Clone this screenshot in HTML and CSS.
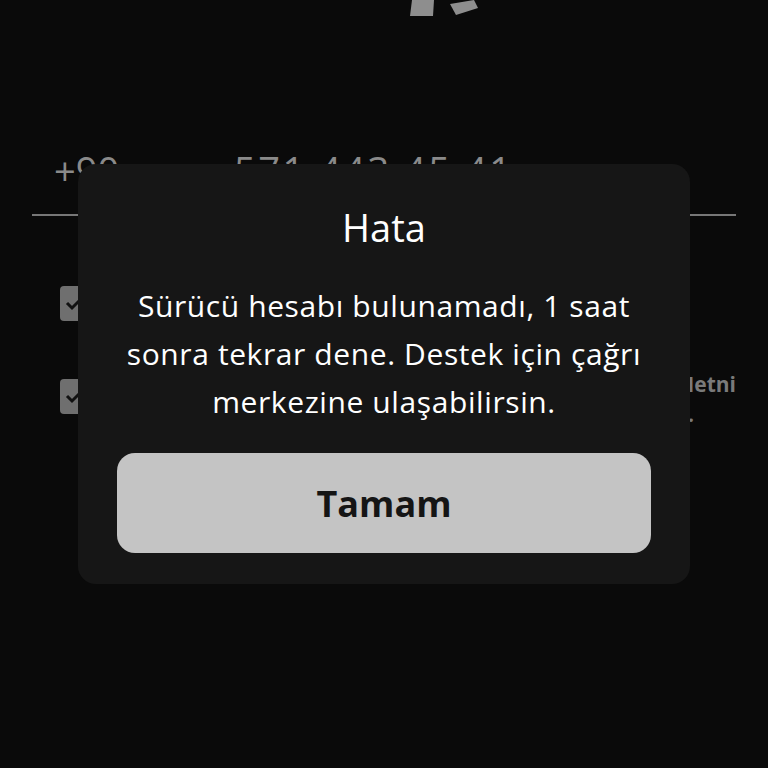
FILE: index.html
```html
<!DOCTYPE html>
<html lang="tr">
<head>
<meta charset="utf-8">
<link rel="stylesheet" href="styles.css">
</head>
<body>
<div class="page">
  <div class="hero">
    <svg width="80" height="20" viewBox="0 0 80 20">
      <polygon points="6,0 28,0 27,16 4,16" fill="#8e8e8e"/>
      <polygon points="44,4 68,0 72,8 50,15" fill="#8e8e8e"/>
    </svg>
  </div>
  <div class="phone">
    <span class="cc">+90</span>
    <span class="num">571 443 45 41</span>
  </div>
  <div class="check-row first">
    <span class="box"><svg width="35" height="35" viewBox="0 0 35 35"><path d="M7 17 L12 22 L20 14" fill="none" stroke="#111" stroke-width="3"/></svg></span>
    <div class="label">Kampanyalardan haberdar olmak istiyorum</div>
  </div>
  <div class="check-row second">
    <span class="box"><svg width="35" height="35" viewBox="0 0 35 35"><path d="M7 17 L12 22 L20 14" fill="none" stroke="#111" stroke-width="3"/></svg></span>
    <div class="label">
      <div class="l1">Kişisel verilerin işlenmesine ilişkin Aydınlatma Metni</div>
      <div class="l2">'ni okudum, anladım.</div>
    </div>
  </div>
</div>
<div class="dialog">
  <div class="title">Hata</div>
  <div class="msg">Sürücü hesabı bulunamadı, 1 saat<br>sonra tekrar dene. Destek için çağrı<br>merkezine ulaşabilirsin.</div>
  <button class="ok">Tamam</button>
</div>
</body>
</html>
```
FILE: styles.css
```css
html, body {
  margin: 0;
  padding: 0;
  background: #0a0a0a;
  width: 768px;
  height: 768px;
  overflow: hidden;
  font-family: "Open Sans", "Noto Sans", sans-serif;
}
.page {
  position: relative;
  width: 768px;
  height: 768px;
}
.hero {
  height: 140px;
  padding-left: 406px;
}
.hero svg { display: block; }
.phone {
  margin: 0 32px;
  height: 76px;
  border-bottom: 2px solid #777;
  box-sizing: border-box;
  display: flex;
  align-items: flex-end;
  padding-bottom: 18px;
  color: #8a8a8a;
  font-size: 38px;
}
.phone .cc { margin-left: 22px; width: 180px; }
.phone .num { letter-spacing: 2.5px; word-spacing: 0; }
.check-row {
  display: flex;
  align-items: flex-start;
  margin-left: 60px;
  margin-right: 32px;
  gap: 18px;
  color: #7a7a7a;
  font-size: 21px;
  font-weight: 700;
}
.check-row.first { margin-top: 70px; }
.check-row.second { margin-top: 58px; }
.box {
  width: 35px;
  height: 35px;
  border-radius: 4px;
  background: #6f6f6f;
  flex: none;
}
.box svg { display: block; }
.label { flex: 1; line-height: 30px; }
.second .label { margin-top: -10px; }
.l1 { text-align: right; }
.l2 { text-align: right; padding-right: 42px; }
.dialog {
  position: absolute;
  left: 78px;
  top: 164px;
  width: 612px;
  height: 420px;
  box-sizing: border-box;
  background: #161616;
  border-radius: 18px;
  padding: 43px 39px 31px;
  display: flex;
  flex-direction: column;
  align-items: stretch;
  color: #fff;
  text-align: center;
}
.title {
  font-size: 38px;
  line-height: 40px;
}
.msg {
  margin-top: 35px;
  font-size: 30px;
  line-height: 48px;
  letter-spacing: 0.6px;
}
.ok {
  margin-top: 27px;
  height: 100px;
  border: none;
  border-radius: 18px;
  background: #c4c4c4;
  color: #151515;
  font-family: inherit;
  font-size: 36px;
  font-weight: 700;
  padding: 0;
}
```
